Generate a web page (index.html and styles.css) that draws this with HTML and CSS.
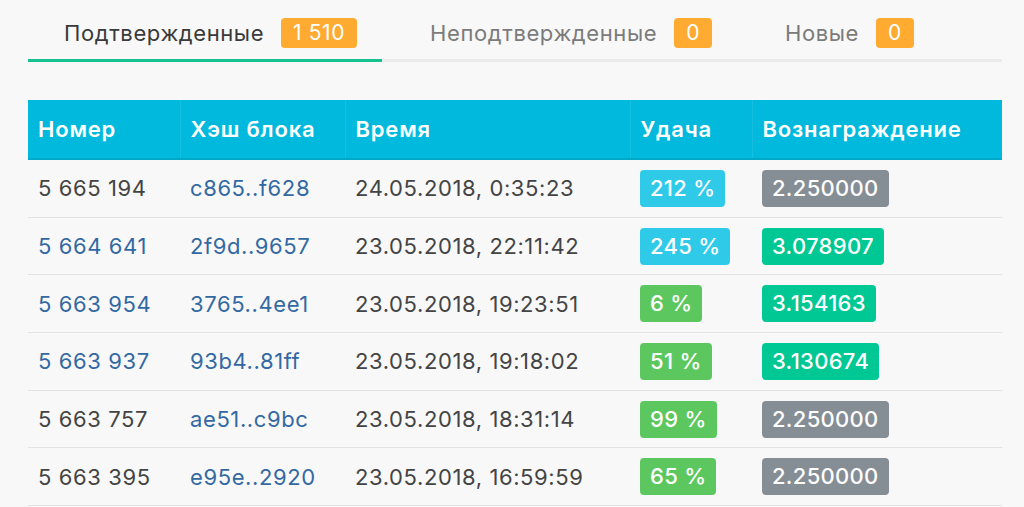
FILE: index.html
```html
<!DOCTYPE html>
<html>
<head>
    <meta charset="UTF-8">
    <title>Блоки</title>
    <link rel="stylesheet" href="styles.css">
</head>
<body>
    <div class="page">
        <div class="tabs">
            <div class="tab active">Подтвержденные <span class="count">1 510</span></div>
            <div class="tab">Неподтвержденные <span class="count">0</span></div>
            <div class="tab">Новые <span class="count">0</span></div>
        </div>

        <table class="blocks">
            <colgroup>
                <col class="c-num">
                <col class="c-hash">
                <col class="c-time">
                <col class="c-luck">
                <col class="c-reward">
            </colgroup>
            <thead>
                <tr>
                    <th>Номер</th>
                    <th>Хэш блока</th>
                    <th>Время</th>
                    <th>Удача</th>
                    <th>Вознаграждение</th>
                </tr>
            </thead>
            <tbody>
                <tr>
                    <td>5 665 194</td>
                    <td><a href="#">c865..f628</a></td>
                    <td>24.05.2018, 0:35:23</td>
                    <td><span class="label info">212 %</span></td>
                    <td><span class="label muted">2.250000</span></td>
                </tr>
                <tr>
                    <td><a href="#">5 664 641</a></td>
                    <td><a href="#">2f9d..9657</a></td>
                    <td>23.05.2018, 22:11:42</td>
                    <td><span class="label info">245 %</span></td>
                    <td><span class="label success">3.078907</span></td>
                </tr>
                <tr>
                    <td><a href="#">5 663 954</a></td>
                    <td><a href="#">3765..4ee1</a></td>
                    <td>23.05.2018, 19:23:51</td>
                    <td><span class="label good">6 %</span></td>
                    <td><span class="label success">3.154163</span></td>
                </tr>
                <tr>
                    <td><a href="#">5 663 937</a></td>
                    <td><a href="#">93b4..81ff</a></td>
                    <td>23.05.2018, 19:18:02</td>
                    <td><span class="label good">51 %</span></td>
                    <td><span class="label success">3.130674</span></td>
                </tr>
                <tr>
                    <td>5 663 757</td>
                    <td><a href="#">ae51..c9bc</a></td>
                    <td>23.05.2018, 18:31:14</td>
                    <td><span class="label good">99 %</span></td>
                    <td><span class="label muted">2.250000</span></td>
                </tr>
                <tr>
                    <td>5 663 395</td>
                    <td><a href="#">e95e..2920</a></td>
                    <td>23.05.2018, 16:59:59</td>
                    <td><span class="label good">65 %</span></td>
                    <td><span class="label muted">2.250000</span></td>
                </tr>
            </tbody>
        </table>
    </div>
</body>
</html>
```

FILE: styles.css
```css
body{
    margin: 0;
    background-color: #f8f8f8;
    font-family: Inter, "Noto Sans", sans-serif;
    color: #444;
    letter-spacing: 0.6px;
}

.page{
    width: 974px;
    padding: 18px 0 0 28px;
}

.tabs{
    display: flex;
    gap: 12px;
    border-bottom: 3px solid #ebebeb;
}

.tab{
    display: flex;
    align-items: center;
    gap: 17px;
    padding: 0 25px 11px 36px;
    font-size: 22px;
    color: #7b7b7b;
    margin-bottom: -3px;
    border-bottom: 3px solid transparent;
}

.tab.active{
    color: #3a3a3a;
    border-bottom-color: #17c18f;
}

.count{
    background-color: #ffaa31;
    color: #fff;
    font-size: 21px;
    line-height: 30px;
    padding: 0 12px;
    border-radius: 4px;
}

.blocks{
    margin-top: 38px;
    width: 974px;
    border-collapse: collapse;
    table-layout: fixed;
    font-size: 22px;
}

.c-num{ width: 152px; }
.c-hash{ width: 165px; }
.c-time{ width: 285px; }
.c-luck{ width: 122px; }
.c-reward{ width: 250px; }

.blocks th{
    background-color: #00b9dc;
    color: #fff;
    font-weight: 600;
    letter-spacing: 0.8px;
    text-align: left;
    height: 58px;
    padding: 0 10px;
    border-left: 1px solid #14bfe0;
    border-bottom: 2px solid #00a8c9;
}

.blocks th:first-child{
    border-left: none;
}

.blocks td{
    height: 56.7px;
    padding: 0 10px;
    border-bottom: 1px solid #e3e3e3;
    color: #444;
    white-space: nowrap;
}

.blocks a{
    color: #3369a2;
    text-decoration: none;
}

.label{
    display: inline-block;
    color: #fff;
    line-height: 37px;
    padding: 0 10px;
    letter-spacing: 0.3px;
    border-radius: 4px;
    font-weight: 500;
}

.info{ background-color: #2fcae8; }
.good{ background-color: #5cc75f; }
.success{ background-color: #00c895; }
.muted{ background-color: #858d95; }
```
